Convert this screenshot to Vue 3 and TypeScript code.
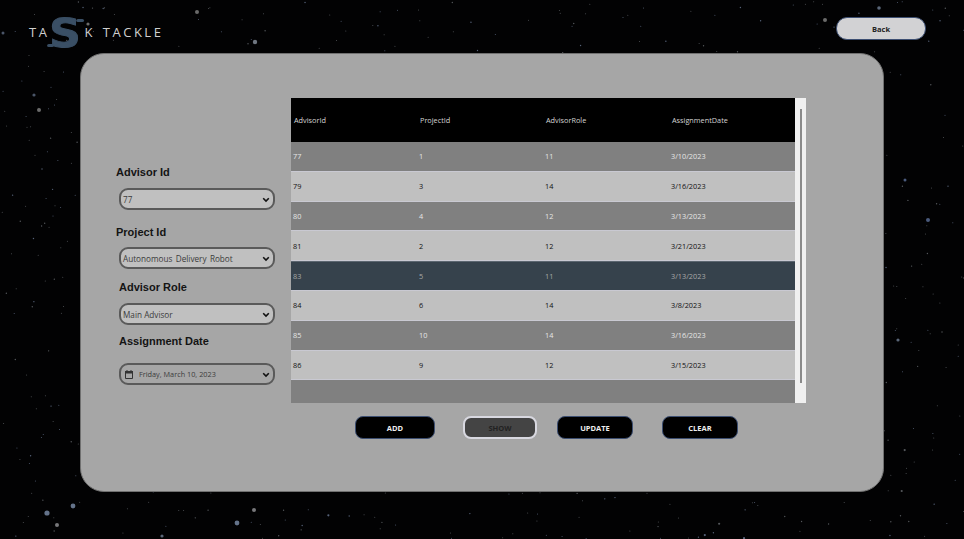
<script setup lang="ts">
interface Assignment {
  advisorId: number;
  projectId: number;
  role: number;
  date: string;
  selected?: boolean;
}

interface Star {
  x: number;
  y: number;
  r: number;
  fill: string;
}

const rows: Assignment[] = [
  { advisorId: 77, projectId: 1, role: 11, date: "3/10/2023" },
  { advisorId: 79, projectId: 3, role: 14, date: "3/16/2023" },
  { advisorId: 80, projectId: 4, role: 12, date: "3/13/2023" },
  { advisorId: 81, projectId: 2, role: 12, date: "3/21/2023" },
  { advisorId: 83, projectId: 5, role: 11, date: "3/13/2023", selected: true },
  { advisorId: 84, projectId: 6, role: 14, date: "3/8/2023" },
  { advisorId: 85, projectId: 10, role: 14, date: "3/16/2023" },
  { advisorId: 86, projectId: 9, role: 12, date: "3/15/2023" },
];

const buttons = ["ADD", "SHOW", "UPDATE", "CLEAR"];

// small seeded generator so the star field stays the same on every load
let seed = 4711;
function rand(): number {
  seed = (seed * 16807) % 2147483647;
  return seed / 2147483647;
}

const stars: Star[] = [];
for (let i = 0; i < 950; i++) {
  const big = rand();
  stars.push({
    x: rand() * 964,
    y: rand() * 539,
    r: big > 0.97 ? 1.1 : big > 0.7 ? 0.7 : 0.5,
    fill: rand() > 0.6 ? "#566278" : "#55585c",
  });
}

// the larger stars that can be picked out in the reference
const brightStars: Star[] = [
  { x: 197, y: 12, r: 2, fill: "#6a6a6a" },
  { x: 255, y: 42, r: 2.2, fill: "#6f7680" },
  { x: 88, y: 24, r: 1.6, fill: "#6b6b6b" },
  { x: 3, y: 33, r: 1.5, fill: "#4a5568" },
  { x: 39, y: 110, r: 2, fill: "#6b6b6b" },
  { x: 34, y: 95, r: 1.6, fill: "#4a5568" },
  { x: 47, y: 513, r: 2.6, fill: "#64738a" },
  { x: 73, y: 506, r: 2.4, fill: "#64738a" },
  { x: 57, y: 525, r: 2, fill: "#77777a" },
  { x: 237, y: 523, r: 2.4, fill: "#64738a" },
  { x: 254, y: 510, r: 2, fill: "#77777a" },
  { x: 162, y: 536, r: 1.6, fill: "#5a6678" },
  { x: 879, y: 8, r: 1.8, fill: "#5a6678" },
  { x: 825, y: 20, r: 2, fill: "#6b6b6b" },
  { x: 928, y: 220, r: 2, fill: "#4a5a7c" },
  { x: 905, y: 180, r: 1.5, fill: "#4a5a7c" },
  { x: 898, y: 340, r: 1.6, fill: "#5a6678" },
];
</script>

<template>
  <div class="page">
    <svg class="sky" width="964" height="539" viewBox="0 0 964 539">
      <circle v-for="(s, i) in stars" :key="i" :cx="s.x" :cy="s.y" :r="s.r" :fill="s.fill" />
      <circle v-for="(s, i) in brightStars" :key="'b' + i" :cx="s.x" :cy="s.y" :r="s.r" :fill="s.fill" />
    </svg>

    <header class="top">
      <div class="logo">
        <span>TA</span>
        <span class="logo-s">S</span>
        <span>K TACKLE</span>
      </div>
      <button class="back">Back</button>
    </header>

    <main class="panel">
      <form class="fields">
        <div class="field f-advisor">
          <label>Advisor Id</label>
          <div class="pick">
            <span>77</span>
            <svg class="chev" width="8" height="6" viewBox="0 0 8 6"><path d="M1.2 1.2L4 4l2.8-2.8" fill="none" stroke="#111" stroke-width="1.6" /></svg>
          </div>
        </div>
        <div class="field f-project">
          <label>Project Id</label>
          <div class="pick">
            <span class="wide">Autonomous Delivery Robot</span>
            <svg class="chev" width="8" height="6" viewBox="0 0 8 6"><path d="M1.2 1.2L4 4l2.8-2.8" fill="none" stroke="#111" stroke-width="1.6" /></svg>
          </div>
        </div>
        <div class="field f-role">
          <label class="shift">Advisor Role</label>
          <div class="pick">
            <span>Main Advisor</span>
            <svg class="chev" width="8" height="6" viewBox="0 0 8 6"><path d="M1.2 1.2L4 4l2.8-2.8" fill="none" stroke="#111" stroke-width="1.6" /></svg>
          </div>
        </div>
        <div class="field f-date">
          <label class="shift">Assignment Date</label>
          <div class="pick date">
            <svg class="cal" width="8" height="9" viewBox="0 0 8 9"><path d="M.5 1.5h7v7h-7z" fill="none" stroke="#333" /><path d="M0 1h8v2.5H0zM1.5 0h1v1h-1zM5.5 0h1v1h-1z" fill="#333" /></svg>
            <span>Friday, March 10, 2023</span>
            <svg class="chev" width="8" height="6" viewBox="0 0 8 6"><path d="M1.2 1.2L4 4l2.8-2.8" fill="none" stroke="#111" stroke-width="1.6" /></svg>
          </div>
        </div>
      </form>

      <section class="right">
        <div class="grid-wrap">
          <div class="grid">
            <div class="head">
              <span>AdvisorId</span>
              <span>ProjectId</span>
              <span>AdvisorRole</span>
              <span>AssignmentDate</span>
            </div>
            <div v-for="r in rows" :key="r.advisorId" class="row" :class="{ selected: r.selected }">
              <span>{{ r.advisorId }}</span>
              <span>{{ r.projectId }}</span>
              <span>{{ r.role }}</span>
              <span>{{ r.date }}</span>
            </div>
            <div class="row filler"></div>
          </div>
          <div class="scroll"><div class="thumb"></div></div>
        </div>
        <div class="actions">
          <button v-for="b in buttons" :key="b" class="act" :class="['b-' + b.toLowerCase(), { on: b === 'SHOW' }]">{{ b }}</button>
        </div>
      </section>
    </main>
  </div>
</template>

<style>
html,
body {
  margin: 0;
  background: #000;
}
</style>

<style scoped>
.page {
  position: relative;
  width: 964px;
  height: 539px;
  overflow: hidden;
  background: #020203;
  font-family: "Open Sans", "Liberation Sans", sans-serif;
}

.sky {
  position: absolute;
  left: 0;
  top: 0;
  filter: blur(0.4px);
}

.top {
  position: relative;
  height: 53px;
  box-sizing: border-box;
  padding: 17px 38px 0 29px;
  display: flex;
  justify-content: space-between;
  align-items: flex-start;
}

.logo {
  display: flex;
  align-items: center;
  height: 29px;
  color: #d0d0d0;
  font-size: 13px;
  font-weight: 500;
  letter-spacing: 2.5px;
  white-space: pre;
  word-spacing: 2px;
}

.logo-s {
  position: relative;
  font-family: "DejaVu Sans", sans-serif;
  font-weight: 700;
  font-size: 39px;
  line-height: 29px;
  letter-spacing: 0;
  color: #3a4f65;
  -webkit-text-stroke: 1px #3a4f65;
  margin: 4px 5px 0 2px;
  transform: scaleX(1.12);
}

/* the little speed streaks on the logo */
.logo-s::before,
.logo-s::after {
  content: "";
  position: absolute;
  height: 3px;
  border-radius: 2px;
  background: #3a4f65;
}

.logo-s::before {
  width: 7px;
  right: -3px;
  top: 0;
}

.logo-s::after {
  width: 6px;
  left: -2px;
  top: 25px;
}

.back {
  width: 90px;
  height: 23px;
  box-sizing: border-box;
  border: 1px solid #3d4f72;
  border-radius: 11px;
  background: #d2d2d4;
  color: #222;
  font: 700 7.5px "Open Sans", sans-serif;
  padding: 0;
}

.panel {
  position: relative;
  box-sizing: border-box;
  width: 804px;
  height: 439px;
  margin-left: 80px;
  padding: 44px 0 0 35px;
  border: 1px solid #707070;
  border-radius: 24px;
  background: #a6a6a6;
  display: flex;
}

.fields {
  width: 175px;
  padding-top: 67px;
}

.field label {
  display: block;
  font: 700 11px "Liberation Sans", sans-serif;
  line-height: 14px;
  color: #141414;
}

.shift {
  margin-left: 3px;
}

.pick {
  position: relative;
  box-sizing: border-box;
  width: 156px;
  height: 22px;
  margin: 9px 0 0 3px;
  padding: 0 2px;
  display: flex;
  align-items: center;
  border: 2px solid #5a5a5a;
  border-radius: 9px;
  background: #c0c0c0;
  color: #3c3c3c;
  font-size: 8.2px;
}

.wide {
  word-spacing: 1.2px;
}

.f-project .pick {
  margin-top: 8px;
}

.date {
  background: #a6a6a6;
  margin-top: 15px;
  padding-left: 4px;
  font-size: 7.3px;
}

.cal {
  margin-right: 6px;
}

.chev {
  position: absolute;
  right: 3px;
  top: 6.5px;
}

.f-project {
  margin-top: 15px;
}

.f-role {
  margin-top: 11px;
}

.f-date {
  margin-top: 9px;
}

.right {
  width: 515px;
}

.grid-wrap {
  display: flex;
  height: 305px;
  background: #f0f0f0;
}

.grid {
  width: 504px;
  background: #808080;
}

.head,
.row {
  display: grid;
  grid-template-columns: 126px 126px 126px 1fr;
  align-items: center;
  box-sizing: border-box;
  font-size: 7.3px;
  font-weight: 500;
}

.head {
  height: 44px;
  padding-left: 3px;
  background: #000;
  color: #d4d4d4;
}

.row {
  height: 29.8px;
  padding-left: 2px;
  background: #808080;
  color: #e6e6e6;
  border-bottom: 1px solid #c9c9d2;
}

.row:nth-child(odd) {
  background: #c0c0c0;
  color: #111;
}

.row.selected {
  background: #36424c;
  color: #a8a8a8;
  border-top: 1px solid #5c6670;
}

.row.filler {
  height: 22px;
  background: #808080;
  border: 0;
}

.scroll {
  flex: 1;
  display: flex;
  justify-content: center;
  padding-top: 11px;
}

.thumb {
  width: 2px;
  height: 274px;
  background: #8a8a8a;
}

.actions {
  display: flex;
  margin: 13px 0 0 64px;
}

.act {
  box-sizing: border-box;
  height: 23px;
  padding: 0;
  border: 1px solid #3d4f72;
  border-radius: 8px;
  background: #000;
  color: #eee;
  font: 700 7.5px "Open Sans", sans-serif;
}

.b-add {
  width: 80px;
}

.b-show {
  width: 74px;
  margin-left: 28px;
}

.b-update,
.b-clear {
  width: 76px;
}

.b-update {
  margin-left: 20px;
}

.b-clear {
  margin-left: 29px;
}

.act.on {
  background: #444;
  color: #222;
  border: 2px solid #d8d8e0;
}
</style>
